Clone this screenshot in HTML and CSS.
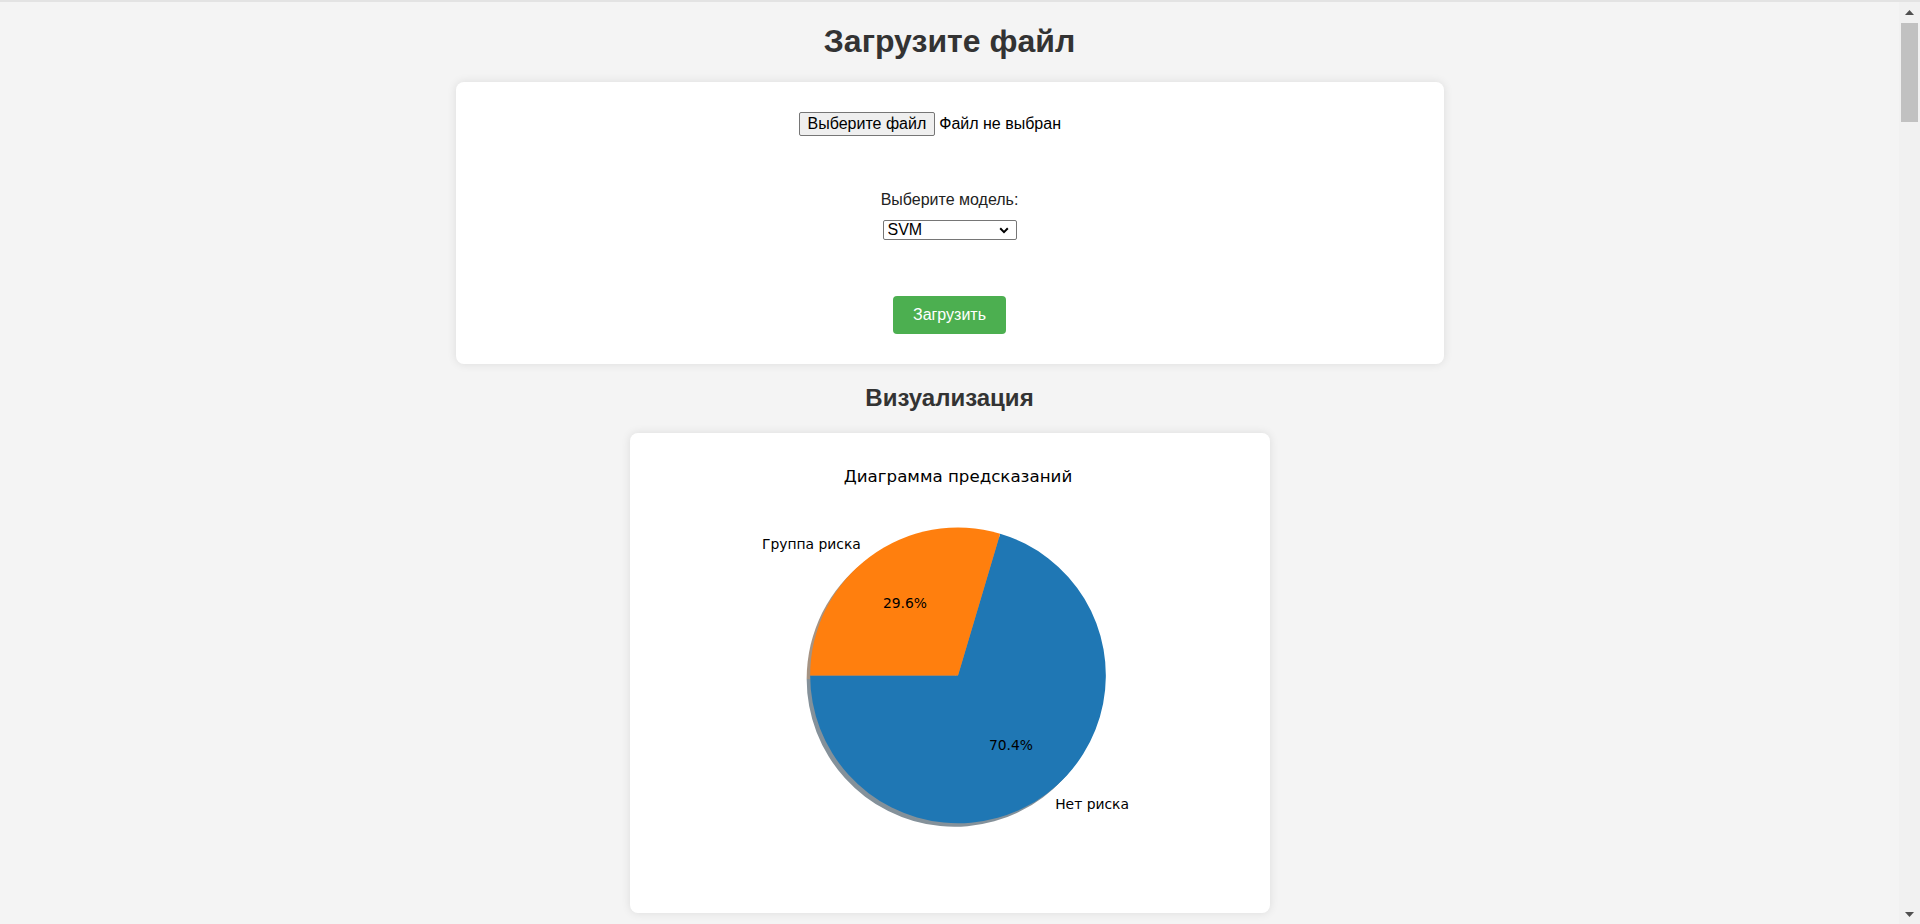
FILE: index.html
```html
<!DOCTYPE html>
<html lang="ru">
<head>
<meta charset="utf-8">
<title>Загрузка файла</title>
<link rel="stylesheet" href="styles.css">
</head>
<body>
<h1 class="page-title">Загрузите файл</h1>
<form class="card upload-card" onsubmit="return false">
  <div class="file-input">
    <button type="button" class="file-btn">Выберите файл</button><span class="file-name">Файл не выбран</span>
  </div>
  <label class="model-label" for="model">Выберите модель:</label>
  <span class="select-wrap">
    <select id="model" class="model-select">
      <option>SVM</option>
      <option>Random Forest</option>
      <option>KNN</option>
    </select>
    <svg class="select-chevron" width="10" height="7" viewBox="0 0 10 7" aria-hidden="true"><polyline points="1.2,1.3 5,5.1 8.8,1.3" fill="none" stroke="#000" stroke-width="2"/></svg>
  </span>
  <button type="submit" class="submit-btn">Загрузить</button>
</form>
<h2 class="section-title">Визуализация</h2>
<svg class="chart-card" width="640" height="480" viewBox="0 0 640 480" xmlns="http://www.w3.org/2000/svg">
  <g transform="translate(-3.5 3.5)">
    <path d="M328 242.4 L180.16 242.4 A147.84 147.84 0 1 0 370.14 100.7 Z" fill="#84919a"/>
    <path d="M328 242.4 L370.14 100.7 A147.84 147.84 0 0 0 180.16 242.4 Z" fill="#a69382"/>
  </g>
  <path d="M328 242.4 L180.16 242.4 A147.84 147.84 0 1 0 370.14 100.7 Z" fill="#1f77b4"/>
  <path d="M328 242.4 L370.14 100.7 A147.84 147.84 0 0 0 180.16 242.4 Z" fill="#ff7f0e"/>
  <text class="chart-title" x="328" y="49.3" text-anchor="middle">Диаграмма предсказаний</text>
  <text class="chart-label" x="230.8" y="115.7" text-anchor="end">Группа риска</text>
  <text class="chart-label" x="425.2" y="376.3" text-anchor="start">Нет риска</text>
  <text class="chart-label" x="275" y="175" text-anchor="middle">29.6%</text>
  <text class="chart-label" x="381" y="317.2" text-anchor="middle">70.4%</text>
</svg>
<div class="scrollbar" aria-hidden="true">
  <div class="sb-arrow sb-up"><svg width="9" height="5" viewBox="0 0 9 5"><polygon points="0,5 4.5,0 9,5" fill="#505050"/></svg></div>
  <div class="sb-thumb"></div>
  <div class="sb-track"></div>
  <div class="sb-arrow sb-down"><svg width="9" height="5" viewBox="0 0 9 5"><polygon points="0,0 9,0 4.5,5" fill="#505050"/></svg></div>
</div>
</body>
</html>
```
FILE: styles.css
```css
html {
  border-top: 2px solid #e3e3e3;
  overflow: hidden;
  background: #f4f4f4;
}

body {
  margin: 0 21px 0 0;
  background: #f4f4f4;
  color: #333;
  font-family: "Liberation Sans", Arial, sans-serif;
  text-align: center;
}

.page-title {
  font-size: 32px;
  font-weight: bold;
  margin: 21.44px 0;
  color: #333;
}

.card {
  background: #fff;
  border-radius: 8px;
  box-shadow: 0 0 10px rgba(0, 0, 0, 0.1);
}

.upload-card {
  width: 948px;
  margin: 0 auto;
  padding: 30px 20px 30px;
  display: flex;
  flex-direction: column;
  align-items: center;
}

.file-input {
  width: 302px;
  display: flex;
  align-items: center;
  color: #000;
  font-size: 16px;
}

.file-btn {
  font-family: "Liberation Sans", Arial, sans-serif;
  font-size: 16px;
  color: #000;
  background: #efefef;
  border: 1px solid #767676;
  border-radius: 2px;
  padding: 2px 8px;
  margin: 0 4px 0 0;
  line-height: normal;
}

.file-name {
  white-space: nowrap;
}

.model-label {
  margin-top: 55px;
  font-size: 16px;
  color: #222;
  line-height: normal;
}

.select-wrap {
  position: relative;
  display: block;
  margin-top: 11px;
  width: 134px;
  height: 20px;
}

.model-select {
  display: block;
  box-sizing: border-box;
  width: 134px;
  height: 20px;
  margin: 0;
  padding: 0 4px;
  appearance: none;
  -webkit-appearance: none;
  background: #fff;
  border: 1px solid #767676;
  border-radius: 2px;
  font-family: "Liberation Sans", Arial, sans-serif;
  font-size: 16px;
  line-height: 18px;
  color: #000;
  text-align: left;
}

.select-chevron {
  position: absolute;
  right: 8px;
  top: 7px;
  pointer-events: none;
}

.submit-btn {
  margin-top: 56px;
  background: #4caf50;
  color: #fff;
  border: none;
  border-radius: 4px;
  padding: 10px 20px;
  font-family: "Liberation Sans", Arial, sans-serif;
  font-size: 16px;
  line-height: normal;
}

.section-title {
  font-size: 24px;
  font-weight: bold;
  margin: 20px 0 21px;
  color: #333;
}

.chart-card {
  display: block;
  margin: 0 auto 40px;
  background: #fff;
  border-radius: 8px;
  box-shadow: 0 0 10px rgba(0, 0, 0, 0.1);
}

.chart-title {
  font-family: "DejaVu Sans", sans-serif;
  font-size: 16.67px;
  fill: #000;
}

.chart-label {
  font-family: "DejaVu Sans", sans-serif;
  font-size: 13.89px;
  fill: #000;
}

.scrollbar {
  position: fixed;
  top: 2px;
  right: 0;
  bottom: 0;
  width: 21px;
  background: #f1f1f1;
  display: flex;
  flex-direction: column;
}

.sb-arrow {
  display: flex;
  align-items: center;
  justify-content: center;
}

.sb-arrow svg {
  display: block;
}

.sb-up {
  height: 21px;
}

.sb-down {
  height: 20px;
}

.sb-thumb {
  height: 99px;
  margin: 0 2px;
  background: #c1c1c1;
}

.sb-track {
  flex: 1;
}
```
